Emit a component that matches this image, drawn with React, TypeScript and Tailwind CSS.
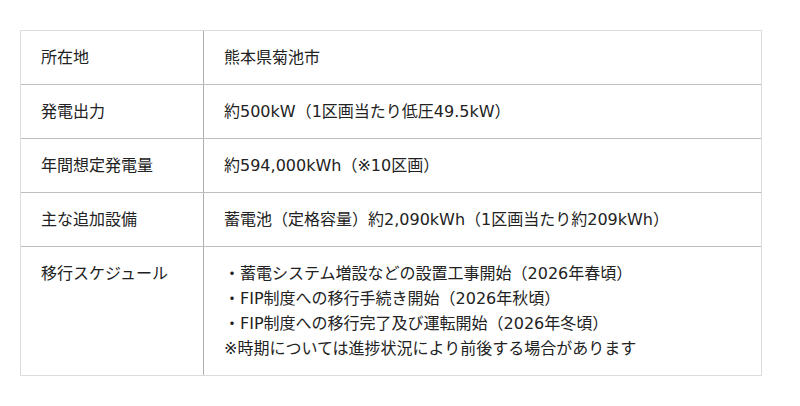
const rows: { label: string; value: string[] }[] = [
  { label: "所在地", value: ["熊本県菊池市"] },
  { label: "発電出力", value: ["約500kW（1区画当たり低圧49.5kW）"] },
  { label: "年間想定発電量", value: ["約594,000kWh（※10区画）"] },
  { label: "主な追加設備", value: ["蓄電池（定格容量）約2,090kWh（1区画当たり約209kWh）"] },
  {
    label: "移行スケジュール",
    value: [
      "・蓄電システム増設などの設置工事開始（2026年春頃）",
      "・FIP制度への移行手続き開始（2026年秋頃）",
      "・FIP制度への移行完了及び運転開始（2026年冬頃）",
      "※時期については進捗状況により前後する場合があります",
    ],
  },
]

export default function App() {
  return (
    <div
      className="min-h-[406px] bg-white pt-[30px] pl-[20px] text-[#222] text-base leading-[25px]"
      style={{ fontFamily: '"DejaVu Sans", "Noto Sans CJK JP", sans-serif' }}
    >
      <div className="w-[742px] border border-[#dcdcdc]">
        {rows.map((row, i) => (
          <div
            key={row.label}
            className={
              "grid grid-cols-[183px_1fr] " +
              (i < rows.length - 1 ? "border-b border-[#bdbdbd]" : "")
            }
          >
            <div className="px-5 py-[14px] border-r border-[#b0b0b0]">{row.label}</div>
            <div className="px-5 py-[14px]">
              {row.value.map((line) => (
                <div key={line}>{line}</div>
              ))}
            </div>
          </div>
        ))}
      </div>
    </div>
  )
}
